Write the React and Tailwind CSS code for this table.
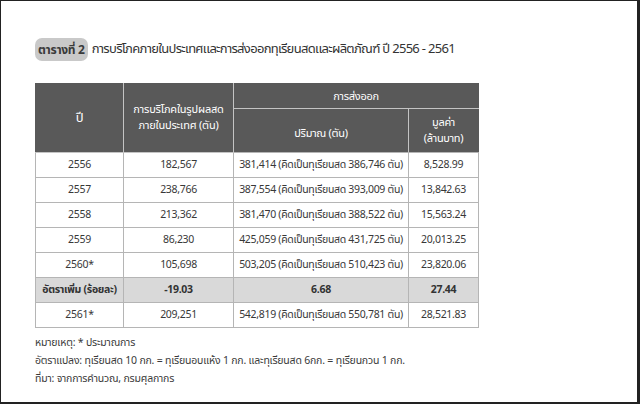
const rows = [
  ["2556", "182,567", "381,414 (คิดเป็นทุเรียนสด 386,746 ตัน)", "8,528.99"],
  ["2557", "238,766", "387,554 (คิดเป็นทุเรียนสด 393,009 ตัน)", "13,842.63"],
  ["2558", "213,362", "381,470 (คิดเป็นทุเรียนสด 388,522 ตัน)", "15,563.24"],
  ["2559", "86,230", "425,059 (คิดเป็นทุเรียนสด 431,725 ตัน)", "20,013.25"],
  ["2560*", "105,698", "503,205 (คิดเป็นทุเรียนสด 510,423 ตัน)", "23,820.06"],
];

function Row({ cells, bold, gray }) {
  return (
    <tr className={gray ? "bg-[#d9d9d9]" : "bg-white"}>
      {cells.map((c, i) => (
        <td
          key={i}
          className={`h-[25px] border border-[#b5b5b5] text-center p-0 whitespace-nowrap ${bold ? "font-bold text-[#333]" : ""}`}
        >
          {c}
        </td>
      ))}
    </tr>
  );
}

export default function App() {
  return (
    <div className="w-[640px] h-[404px] bg-white border border-[#222] border-r-[3px] border-b-[2px] text-[#333] overflow-hidden font-['Noto_Sans_Thai','Noto_Sans',sans-serif]">
      <div className="pl-[34px] pt-[37px]">
        <div className="flex items-center gap-[4px] leading-none whitespace-nowrap">
          <span className="bg-[#c9c9c9] rounded-[7px] px-[3px] h-[23px] flex items-center font-bold text-[12px] tracking-[-0.3px] text-[#3a3a3a]">
            ตารางที่ 2
          </span>
          <span className="text-[13px] tracking-[-0.7px] text-[#333]">
            การบริโภคภายในประเทศและการส่งออกทุเรียนสดและผลิตภัณฑ์ ปี 2556 - 2561
          </span>
        </div>

        <table className="mt-[22px] w-[443px] table-fixed border-collapse text-[10.5px] tracking-[-0.3px] leading-none text-[#383838]">
          <colgroup>
            <col className="w-[88px]" />
            <col className="w-[110px]" />
            <col className="w-[175px]" />
            <col className="w-[70px]" />
          </colgroup>
          <thead className="bg-[#595959] text-white">
            <tr>
              <th rowSpan={2} className="font-normal border border-[#c4c4c4] border-t-[#595959] border-l-[#595959] text-[13px]">
                ปี
              </th>
              <th rowSpan={2} className="font-normal border border-[#c4c4c4] border-t-[#595959] text-[11px] tracking-[-0.2px] leading-[16px] whitespace-nowrap">
                การบริโภคในรูปผลสด
                <br />
                ภายในประเทศ (ตัน)
              </th>
              <th colSpan={2} className="h-[25px] font-normal text-[11px] border border-[#c4c4c4] border-t-[#595959] border-r-[#595959]">
                การส่งออก
              </th>
            </tr>
            <tr>
              <th className="h-[44px] font-normal text-[11px] border border-[#c4c4c4] border-b-[#b5b5b5] pt-[6px]">ปริมาณ (ตัน)</th>
              <th className="font-normal text-[11px] border border-[#c4c4c4] border-r-[#595959] border-b-[#b5b5b5] leading-[16px]">
                มูลค่า
                <br />
                (ล้านบาท)
              </th>
            </tr>
          </thead>
          <tbody>
            {rows.map((r) => (
              <Row key={r[0]} cells={r} />
            ))}
            <Row cells={["อัตราเพิ่ม (ร้อยละ)", "-19.03", "6.68", "27.44"]} bold gray />
            <Row cells={["2561*", "209,251", "542,819 (คิดเป็นทุเรียนสด 550,781 ตัน)", "28,521.83"]} />
          </tbody>
        </table>

        <div className="mt-[6px] text-[10.5px] tracking-[-0.2px] leading-[18px] text-[#3a3a3a] whitespace-nowrap">
          <p>หมายเหตุ: * ประมาณการ</p>
          <p>อัตราแปลง: ทุเรียนสด 10 กก. = ทุเรียนอบแห้ง 1 กก. และทุเรียนสด 6กก. = ทุเรียนกวน 1 กก.</p>
          <p>ที่มา: จากการคำนวณ, กรมศุลกากร</p>
        </div>
      </div>
    </div>
  );
}
